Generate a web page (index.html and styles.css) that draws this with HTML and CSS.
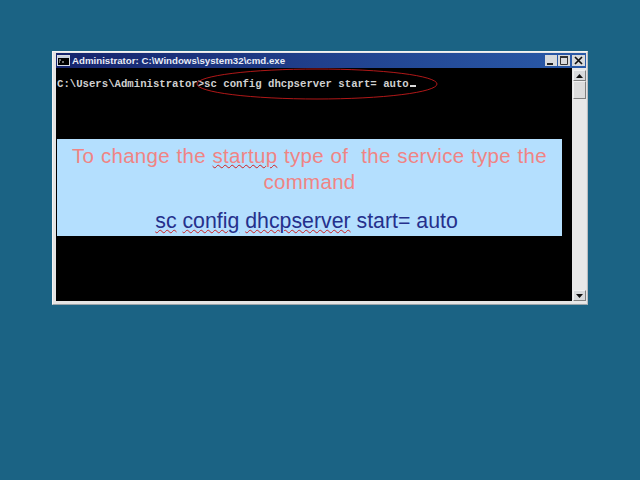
FILE: index.html
```html
<!DOCTYPE html>
<html lang="en">
<head>
<meta charset="utf-8">
<title>Administrator: C:\Windows\system32\cmd.exe</title>
<link rel="stylesheet" href="styles.css">
</head>
<body>
<main class="window">
  <header class="titlebar">
    <svg class="appicon" width="13" height="11" viewBox="0 0 13 11"><rect x="0.5" y="0.500" width="12" height="10" fill="#000" stroke="#d8dce4"/><rect x="1" y="1" width="11" height="2" fill="#c8d0e0"/><path d="M2 5h2M2 7h1M5 7h2" stroke="#ddd" fill="none"/></svg>
    <span class="title">Administrator: C:\Windows\system32\cmd.exe</span>
    <div class="controls">
      <span class="btn"><svg width="12" height="11" viewBox="0 0 12 11"><rect x="2" y="8" width="6" height="2" fill="#222"/></svg></span>
      <span class="btn"><svg width="12" height="11" viewBox="0 0 12 11"><path d="M2.500 2.500h7v7h-7z" fill="none" stroke="#333"/><rect x="2" y="1" width="8" height="2" fill="#333"/></svg></span>
      <span class="btn close"><svg width="13" height="11" viewBox="0 0 13 11"><path d="M3 2l7 7M10 2l-7 7" stroke="#111" stroke-width="1.700" fill="none"/></svg></span>
    </div>
  </header>
  <div class="content">
    <section class="console">
      <div class="prompt">C:\Users\Administrator&gt;sc config dhcpserver start= auto<span class="cursor"></span></div>
      <svg class="ellipse" width="244" height="32" viewBox="0 0 244 32"><ellipse cx="121" cy="16" rx="120" ry="15" fill="none" stroke="#b01818" stroke-width="1"/></svg>
      <div class="callout">
        <p class="instruction">To change the <span class="spell">startup</span> type of&nbsp; the service type the command</p>
        <p class="command"><span class="spell">sc</span> <span class="spell">config</span> <span class="spell">dhcpserver</span> start= auto</p>
      </div>
    </section>
    <aside class="scrollbar">
      <span class="arrow"><svg width="7" height="4" viewBox="0 0 7 4"><path d="M3.500 0L7 4H0z" fill="#111"/></svg></span>
      <span class="thumb"></span>
      <span class="track"></span>
      <span class="arrow"><svg width="7" height="4" viewBox="0 0 7 4"><path d="M0 0h7L3.500 4z" fill="#111"/></svg></span>
    </aside>
  </div>
</main>
</body>
</html>
```

FILE: styles.css
```css
* { box-sizing: border-box; }
html, body { margin: 0; height: 100%; }
body {
  background: #1b6384;
  padding: 51px 52px;
  font-family: "Liberation Sans", Arial, sans-serif;
  overflow: hidden;
}
.window {
  width: 536px;
  height: 254px;
  display: flex;
  flex-direction: column;
  background: #e4e4e4;
  border: 1px solid #f4f4f4;
  border-right-color: #b8bcc0;
  border-bottom-color: #9aa4aa;
  padding: 1px 1px 1px 3px;
}
.titlebar {
  height: 15px;
  flex: none;
  display: flex;
  align-items: center;
  gap: 2px;
  padding: 0 1px;
  background: linear-gradient(90deg, #16246c 0%, #20408c 50%, #2a5aa8 100%);
  color: #e8ecf6;
}
.title { font-size: 9.7px; font-weight: bold; white-space: nowrap; }
.controls { margin-left: auto; display: flex; gap: 1px; }
.btn {
  height: 11px;
  width: 12px;
  display: block;
  background: #d8dadc;
  line-height: 0;
}
.close { width: 13px; margin-left: 1px; }
.content { flex: 1; min-height: 0; display: flex; }
.console {
  position: relative;
  flex: 1;
  min-width: 0;
  background: #000;
  margin: 0 0 2px;
  padding: 10px 0 0 1px;
}
.prompt {
  font-family: "Liberation Mono", monospace;
  font-size: 10.67px;
  font-weight: bold;
  line-height: 12px;
  color: #d0d0d0;
  white-space: pre;
}
.cursor {
  display: inline-block;
  width: 6px;
  height: 2px;
  background: #d8d8d8;
  margin-left: 1px;
}
.ellipse { position: absolute; left: 140px; top: 0; }
.callout {
  position: absolute;
  left: 1px;
  top: 71px;
  width: 505px;
  height: 97px;
  background: #b4dffe;
  text-align: center;
  padding: 4px 10px 0;
}
.instruction {
  margin: 0;
  font-size: 20.5px;
  line-height: 26px;
  letter-spacing: 0.3px;
  word-spacing: 0.6px;
  color: #f08484;
}
.command {
  margin: 13px 0 0;
  padding-right: 6px;
  font-size: 21.3px;
  line-height: 26px;
  color: #25308c;
}
.spell { text-decoration: underline wavy #d02020 1px; text-underline-offset: 1px; }
.scrollbar {
  width: 14px;
  flex: none;
  display: flex;
  flex-direction: column;
  background: #e8e8e8;
  padding: 2px 0 2px 1px;
}
.arrow {
  height: 11px;
  flex: none;
  display: flex;
  align-items: center;
  justify-content: center;
  background: #d8dadc;
  border: 1px solid;
  border-color: #f0f0f0 #808080 #808080 #f0f0f0;
}
.thumb {
  height: 18px;
  flex: none;
  background: #dcdcdc;
  border: 1px solid;
  border-color: #f0f0f0 #808080 #808080 #f0f0f0;
}
.track { flex: 1; }
```
